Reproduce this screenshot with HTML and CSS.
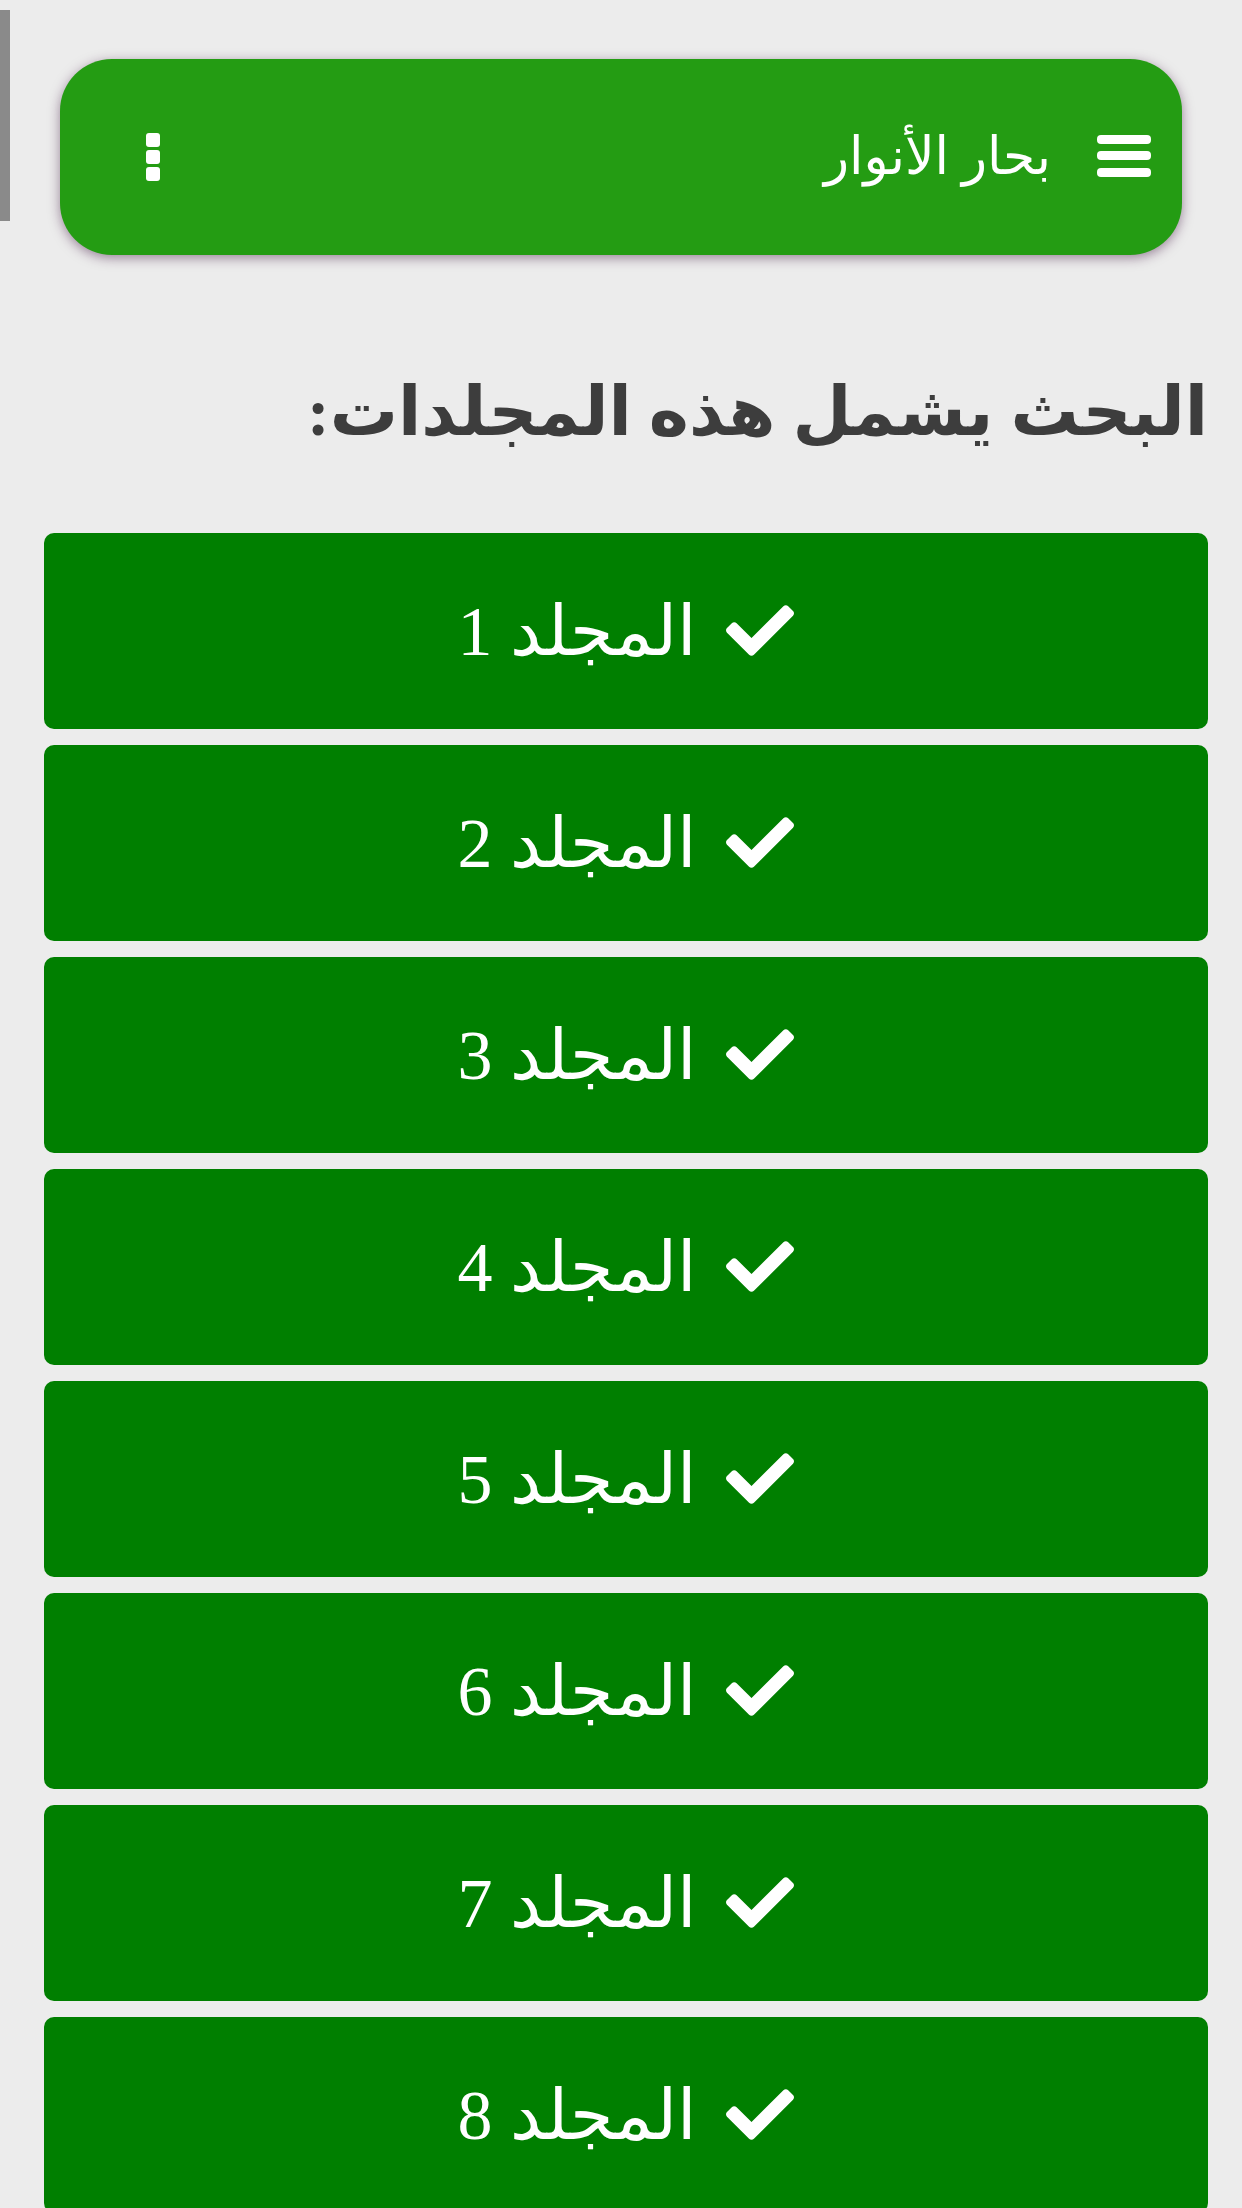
FILE: index.html
```
<!DOCTYPE html>
<html lang="ar" dir="rtl">
    <head>
        <meta charset="utf-8">
        <meta name="viewport" content="width=device-width, initial-scale=1" />
        <title>بحار الأنوار</title>
        <link rel="stylesheet" href="styles.css">
    </head>
    <body>
        <div class="scroll-thumb"></div>

        <div class="topbar">
            <button class="menu-btn" aria-label="القائمة">
                <svg width="54" height="44" viewBox="0 0 54 44">
                    <rect x="0" y="0" width="54" height="9" rx="4" fill="#fff"/>
                    <rect x="0" y="16" width="54" height="9" rx="4" fill="#fff"/>
                    <rect x="0" y="33" width="54" height="9" rx="4" fill="#fff"/>
                </svg>
            </button>
            <span class="app-title">بحار الأنوار</span>
            <button class="more-btn" aria-label="المزيد">
                <svg width="14" height="48" viewBox="0 0 14 48">
                    <rect x="0" y="0" width="14" height="14" rx="3" fill="#fff"/>
                    <rect x="0" y="17" width="14" height="14" rx="3" fill="#fff"/>
                    <rect x="0" y="34" width="14" height="14" rx="3" fill="#fff"/>
                </svg>
            </button>
        </div>

        <div class="content">
            <h1 class="search-title">البحث يشمل هذه المجلدات:</h1>

            <div class="volumes">
                <div class="volume"><svg class="check" viewBox="0 64 512 384"><path d="M173.9 439.4l-166.4-166.4c-10-10-10-26.2 0-36.2l36.2-36.2c10-10 26.2-10 36.2 0L192 312.7 432.1 72.6c10-10 26.2-10 36.2 0l36.2 36.2c10 10 10 26.2 0 36.2l-294.4 294.4c-10 10-26.2 10-36.2 0z"/></svg><span>المجلد 1</span></div>
                <div class="volume"><svg class="check" viewBox="0 64 512 384"><path d="M173.9 439.4l-166.4-166.4c-10-10-10-26.2 0-36.2l36.2-36.2c10-10 26.2-10 36.2 0L192 312.7 432.1 72.6c10-10 26.2-10 36.2 0l36.2 36.2c10 10 10 26.2 0 36.2l-294.4 294.4c-10 10-26.2 10-36.2 0z"/></svg><span>المجلد 2</span></div>
                <div class="volume"><svg class="check" viewBox="0 64 512 384"><path d="M173.9 439.4l-166.4-166.4c-10-10-10-26.2 0-36.2l36.2-36.2c10-10 26.2-10 36.2 0L192 312.7 432.1 72.6c10-10 26.2-10 36.2 0l36.2 36.2c10 10 10 26.2 0 36.2l-294.4 294.4c-10 10-26.2 10-36.2 0z"/></svg><span>المجلد 3</span></div>
                <div class="volume"><svg class="check" viewBox="0 64 512 384"><path d="M173.9 439.4l-166.4-166.4c-10-10-10-26.2 0-36.2l36.2-36.2c10-10 26.2-10 36.2 0L192 312.7 432.1 72.6c10-10 26.2-10 36.2 0l36.2 36.2c10 10 10 26.2 0 36.2l-294.4 294.4c-10 10-26.2 10-36.2 0z"/></svg><span>المجلد 4</span></div>
                <div class="volume"><svg class="check" viewBox="0 64 512 384"><path d="M173.9 439.4l-166.4-166.4c-10-10-10-26.2 0-36.2l36.2-36.2c10-10 26.2-10 36.2 0L192 312.7 432.1 72.6c10-10 26.2-10 36.2 0l36.2 36.2c10 10 10 26.2 0 36.2l-294.4 294.4c-10 10-26.2 10-36.2 0z"/></svg><span>المجلد 5</span></div>
                <div class="volume"><svg class="check" viewBox="0 64 512 384"><path d="M173.9 439.4l-166.4-166.4c-10-10-10-26.2 0-36.2l36.2-36.2c10-10 26.2-10 36.2 0L192 312.7 432.1 72.6c10-10 26.2-10 36.2 0l36.2 36.2c10 10 10 26.2 0 36.2l-294.4 294.4c-10 10-26.2 10-36.2 0z"/></svg><span>المجلد 6</span></div>
                <div class="volume"><svg class="check" viewBox="0 64 512 384"><path d="M173.9 439.4l-166.4-166.4c-10-10-10-26.2 0-36.2l36.2-36.2c10-10 26.2-10 36.2 0L192 312.7 432.1 72.6c10-10 26.2-10 36.2 0l36.2 36.2c10 10 10 26.2 0 36.2l-294.4 294.4c-10 10-26.2 10-36.2 0z"/></svg><span>المجلد 7</span></div>
                <div class="volume"><svg class="check" viewBox="0 64 512 384"><path d="M173.9 439.4l-166.4-166.4c-10-10-10-26.2 0-36.2l36.2-36.2c10-10 26.2-10 36.2 0L192 312.7 432.1 72.6c10-10 26.2-10 36.2 0l36.2 36.2c10 10 10 26.2 0 36.2l-294.4 294.4c-10 10-26.2 10-36.2 0z"/></svg><span>المجلد 8</span></div>
            </div>
        </div>
    </body>
</html>
```

FILE: styles.css
```
body {
    margin: 0;
    background-color: #ececec;
    font-family: "Liberation Serif", "DejaVu Sans", serif;
    direction: rtl;
    overflow: hidden;
}

/* the little grey scroll thumb on the left edge */
.scroll-thumb {
    position: fixed;
    left: 0;
    top: 10px;
    width: 10px;
    height: 211px;
    background-color: #8a8a8a;
}

.topbar {
    display: flex;
    align-items: center;
    height: 196px;
    margin: 59px 60px 0 60px;
    padding: 0 31px 0 86px;
    background-color: #249c13;
    border-radius: 52px;
    box-shadow: 0 3px 12px rgba(70, 30, 70, 0.5);
    color: #fff;
}

.menu-btn,
.more-btn {
    display: flex;
    padding: 0;
    border: 0;
    background: transparent;
}

.app-title {
    margin-right: 46px;
    font-size: 52px;
    line-height: 1;
}

.more-btn {
    margin-right: auto; /* push to the far left */
}

.content {
    padding: 0 34px 0 44px;
}

.search-title {
    margin: 0;
    padding: 117px 0 79px;
    font-size: 68px;
    font-weight: bold;
    line-height: 1.2;
    color: #3d3d3d;
}

.volumes {
    display: flex;
    flex-direction: column;
    gap: 16px;
}

.volume {
    display: flex;
    justify-content: center;
    align-items: center;
    gap: 30px;
    height: 196px;
    background-color: #007f00;
    border-radius: 10px;
    color: #fff;
    font-size: 70px;
}

.check {
    width: 68px;
    height: 51px;
    fill: #fff;
}
```
